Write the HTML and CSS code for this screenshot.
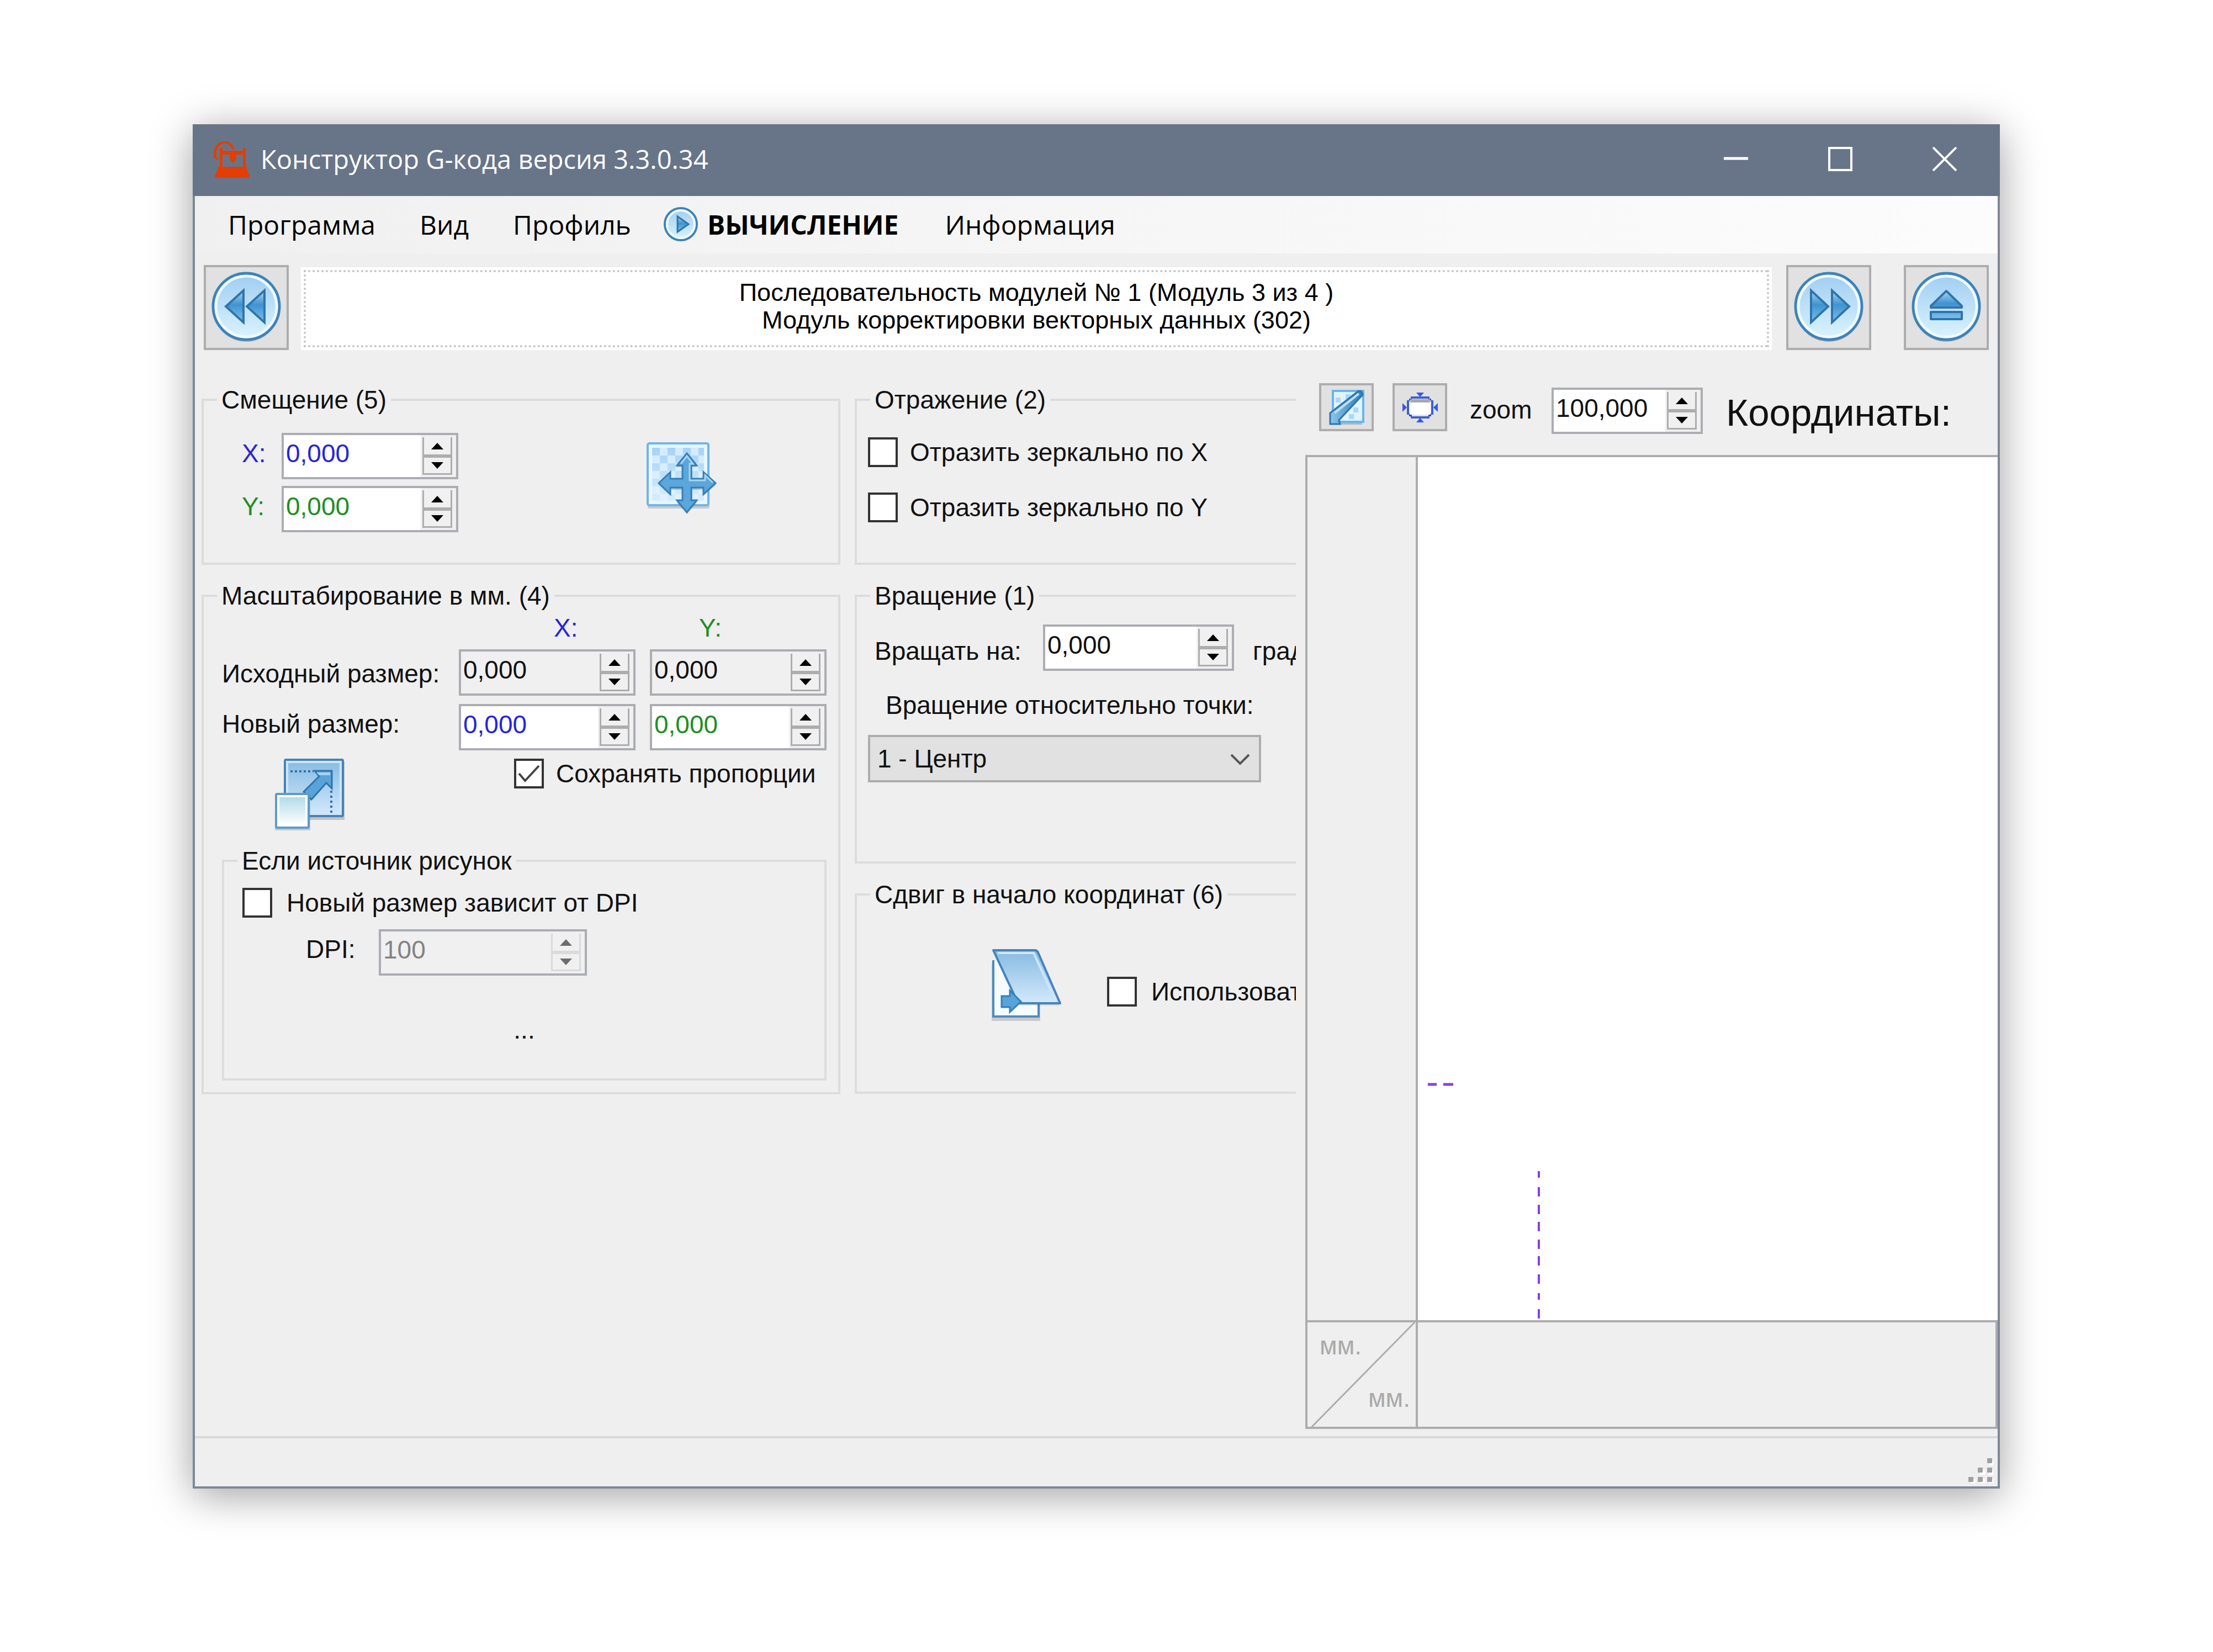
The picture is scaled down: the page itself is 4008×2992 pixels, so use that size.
FILE: index.html
```html
<!DOCTYPE html>
<html lang="ru">
<head>
<meta charset="utf-8">
<title>Конструктор G-кода версия 3.3.0.34</title>
<link rel="stylesheet" href="styles.css">
</head>
<body>
<svg class="defs" aria-hidden="true">
  <defs>
    <linearGradient id="disc" x1="0" y1="0" x2="0" y2="1"><stop offset="0" stop-color="#9fcdf1"/><stop offset="1" stop-color="#dcf4ff"/></linearGradient>
    <linearGradient id="glyph" x1="0" y1="0" x2="0" y2="1"><stop offset="0" stop-color="#a9d6f2"/><stop offset=".45" stop-color="#3f93cf"/><stop offset="1" stop-color="#7cc2ef"/></linearGradient>
    <linearGradient id="pane" x1="0" y1="0" x2="0" y2="1"><stop offset="0" stop-color="#86bbe2"/><stop offset="1" stop-color="#d3e9fb"/></linearGradient>
    <linearGradient id="page" x1="0" y1="0" x2="0" y2="1"><stop offset="0" stop-color="#b4dbea"/><stop offset="1" stop-color="#ffffff"/></linearGradient>
    <linearGradient id="pencil" x1="0" y1="0" x2="1" y2="0"><stop offset="0" stop-color="#8cc6ea"/><stop offset="1" stop-color="#2f7db8"/></linearGradient>
    <linearGradient id="checkfade" x1="0" y1="0" x2="0" y2="1"><stop offset="0" stop-color="#e3f3ff" stop-opacity="0"/><stop offset="1" stop-color="#e3f3ff" stop-opacity=".8"/></linearGradient>
    <pattern id="checks" width="28" height="28" patternUnits="userSpaceOnUse" x="10" y="10"><rect width="28" height="28" fill="#d3ebfd"/><rect width="14" height="14" fill="#a5d3f7"/><rect x="14" y="14" width="14" height="14" fill="#a5d3f7"/></pattern>
  </defs>
</svg>
<main class="window">
  <header class="titlebar">
    <svg class="app-icon" viewBox="0 0 67 68" fill="#e23e06">
      <path d="M10 47V36L2 32V18L8 7L16 2H28L36 8L40 17H36L31 9L25 6H18L11 11L7 19V30L10 34Z"/>
      <path d="M13 14h5v5h37v-5h5v34h2v6l5 9v5H4v-5l5-9v-6h4zM18 26v22h37V26H43v9l-6 6-6-6v-9z" fill-rule="evenodd"/>
    </svg>
    <h1 class="title">Конструктор G-кода версия 3.3.0.34</h1>
    <div class="window-buttons">
      <button type="button" aria-label="Свернуть"><svg viewBox="0 0 44 44"><path d="M0 21h44" stroke="#fff" stroke-width="5"/></svg></button>
      <button type="button" aria-label="Развернуть"><svg viewBox="0 0 44 44"><rect x="2" y="2" width="40" height="40" fill="none" stroke="#fff" stroke-width="4"/></svg></button>
      <button type="button" aria-label="Закрыть"><svg viewBox="0 0 44 44"><path d="M1 1l42 42M43 1L1 43" stroke="#fff" stroke-width="4"/></svg></button>
    </div>
  </header>

  <nav class="menu">
    <a href="#program">Программа</a>
    <a href="#view">Вид</a>
    <a href="#profile">Профиль</a>
    <a href="#calc" class="calc">
      <svg viewBox="0 0 64 66"><circle cx="32" cy="34" r="29" fill="#00000030"/><circle cx="32" cy="32" r="29" fill="url(#disc)" stroke="#3c83bb" stroke-width="4"/><circle cx="32" cy="32" r="25" fill="none" stroke="#f3fbff" stroke-width="4"/><path d="M26 18v28l20-14z" fill="url(#glyph)" stroke="#2f74ac" stroke-width="3"/></svg>
      <b>ВЫЧИСЛЕНИЕ</b>
    </a>
    <a href="#info">Информация</a>
  </nav>

  <section class="module-bar">
    <button type="button" class="nav-button" aria-label="Предыдущий модуль">
      <svg viewBox="0 0 126 130"><circle cx="63" cy="67" r="60" fill="#00000038"/><circle cx="63" cy="63" r="60" fill="url(#disc)" stroke="#3c83bb" stroke-width="5"/><circle cx="63" cy="63" r="55" fill="none" stroke="#eef9ff" stroke-width="5"/><path d="M58 34v58L26 63zM96 34v58L64 63z" fill="url(#glyph)" stroke="#2f74ac" stroke-width="4"/></svg>
    </button>
    <div class="module-name"><p>Последовательность модулей № 1 (Модуль 3 из 4 )<br>Модуль корректировки векторных данных (302)</p></div>
    <button type="button" class="nav-button" aria-label="Следующий модуль">
      <svg viewBox="0 0 126 130"><circle cx="63" cy="67" r="60" fill="#00000038"/><circle cx="63" cy="63" r="60" fill="url(#disc)" stroke="#3c83bb" stroke-width="5"/><circle cx="63" cy="63" r="55" fill="none" stroke="#eef9ff" stroke-width="5"/><path d="M31 34v58l31-29zM69 34v58l31-29z" fill="url(#glyph)" stroke="#2f74ac" stroke-width="4"/></svg>
    </button>
    <button type="button" class="nav-button eject" aria-label="Извлечь">
      <svg viewBox="0 0 126 130"><circle cx="63" cy="67" r="60" fill="#00000038"/><circle cx="63" cy="63" r="60" fill="url(#disc)" stroke="#3c83bb" stroke-width="5"/><circle cx="63" cy="63" r="55" fill="none" stroke="#eef9ff" stroke-width="5"/><path d="M63 35l28 27v3H35v-3zM35 73h56v13H35z" fill="url(#glyph)" stroke="#2f74ac" stroke-width="4" stroke-linejoin="round"/></svg>
    </button>
  </section>

  <div class="workspace">
    <form class="settings">
      <div class="column">
        <fieldset class="group">
          <legend>Смещение (5)</legend>
          <div class="offset">
            <div class="offset-fields">
              <div class="field"><label class="x" for="ox">X:</label><div class="spinner"><input id="ox" class="x" value="0,000"><button type="button" class="up" aria-label="Больше"></button><button type="button" class="down" aria-label="Меньше"></button></div></div>
              <div class="field"><label class="y" for="oy">Y:</label><div class="spinner"><input id="oy" class="y" value="0,000"><button type="button" class="up" aria-label="Больше"></button><button type="button" class="down" aria-label="Меньше"></button></div></div>
            </div>
            <svg class="tool-icon" viewBox="0 0 128 132">
              <rect x="2" y="6" width="112" height="114" rx="3" fill="#00000028"/>
              <rect x="2" y="2" width="110" height="112" rx="3" fill="#e9f6ff" stroke="#6db6ec" stroke-width="4"/>
              <rect x="10" y="10" width="94" height="96" fill="url(#checks)"/>
              <rect x="10" y="10" width="94" height="96" fill="url(#checkfade)"/>
              <path d="M73 24L92 45H83V67H103V57L126 77L103 97V86H83V108H92L73 130L54 108H65V86H43V97L22 77L43 57V67H65V45H54Z" fill="#00000030"/>
              <path d="M73 20L91 42H81V66H103V54L125 74L103 94V82H81V105H91L73 127L55 105H65V82H43V94L22 74L43 54V66H65V42H55Z" fill="#5ba6da" stroke="#357fb8" stroke-width="3"/>
              <path d="M62 39L73 25L84 39H78V69H106V60L120 73" fill="none" stroke="#a9d5f2" stroke-width="3"/>
            </svg>
          </div>
        </fieldset>

        <fieldset class="group scaling">
          <legend>Масштабирование в мм. (4)</legend>
          <div class="sizes">
            <span></span><span class="axis-x x">X:</span><span class="axis-y y">Y:</span>
            <label class="source" for="sx">Исходный размер:</label>
            <div class="spinner readonly"><input id="sx" value="0,000" readonly><button type="button" class="up" aria-label="Больше"></button><button type="button" class="down" aria-label="Меньше"></button></div>
            <div class="spinner readonly"><input id="sy" aria-label="Исходный размер Y" value="0,000" readonly><button type="button" class="up" aria-label="Больше"></button><button type="button" class="down" aria-label="Меньше"></button></div>
            <label for="nx">Новый размер:</label>
            <div class="spinner"><input id="nx" class="x" value="0,000"><button type="button" class="up" aria-label="Больше"></button><button type="button" class="down" aria-label="Меньше"></button></div>
            <div class="spinner"><input id="ny" class="y" aria-label="Новый размер Y" value="0,000"><button type="button" class="up" aria-label="Больше"></button><button type="button" class="down" aria-label="Меньше"></button></div>
          </div>
          <div class="proportions">
            <svg class="tool-icon" viewBox="0 0 128 132">
              <rect x="17" y="5" width="109" height="106" fill="#00000030"/>
              <rect x="18" y="2" width="105" height="102" rx="2" fill="url(#pane)" stroke="#4583bb" stroke-width="4"/>
              <rect x="22" y="6" width="97" height="94" fill="none" stroke="#cfe6f8" stroke-width="4"/>
              <path d="M28 23h42" stroke="#2f74ac" stroke-width="4" stroke-dasharray="4 4"/><path d="M102 58v40" stroke="#2f74ac" stroke-width="4" stroke-dasharray="4 5"/>
              <path d="M72 22h31v32L93 44L66 74L52 60L80 32Z" fill="#58a3da" stroke="#2f74ac" stroke-width="3"/>
              <path d="M75 25h25v5H80z" fill="#a9d1ee"/>
              <rect x="0" y="66" width="64" height="64" fill="#00000028"/>
              <rect x="2" y="64" width="59" height="61" rx="2" fill="#fff" stroke="#5b9ccb" stroke-width="4"/><rect x="8" y="70" width="47" height="50" fill="url(#page)"/>
            </svg>
            <label class="check"><input type="checkbox" checked>Сохранять пропорции</label>
          </div>
          <fieldset class="group picture">
            <legend>Если источник рисунок</legend>
            <label class="check"><input type="checkbox">Новый размер зависит от DPI</label>
            <div class="dpi"><label for="dpi">DPI:</label><div class="spinner disabled"><input id="dpi" value="100" disabled><button type="button" class="up" aria-label="Больше" disabled></button><button type="button" class="down" aria-label="Меньше" disabled></button></div></div>
            <p class="note">...</p>
          </fieldset>
        </fieldset>
      </div>

      <div class="column">
        <fieldset class="group mirror">
          <legend>Отражение (2)</legend>
          <label class="check"><input type="checkbox">Отразить зеркально по X</label>
          <label class="check"><input type="checkbox">Отразить зеркально по Y</label>
        </fieldset>

        <fieldset class="group rotation">
          <legend>Вращение (1)</legend>
          <div class="angle"><label for="angle">Вращать на:</label><div class="spinner"><input id="angle" value="0,000"><button type="button" class="up" aria-label="Больше"></button><button type="button" class="down" aria-label="Меньше"></button></div><span>градусов</span></div>
          <label class="pivot-label" for="pivot">Вращение относительно точки:</label>
          <div class="pivot">
            <select id="pivot"><option>1 - Центр</option></select>
            <svg viewBox="0 0 36 22"><path d="M2 2l16 16L34 2" fill="none" stroke="#555" stroke-width="4"/></svg>
          </div>
        </fieldset>

        <fieldset class="group">
          <legend>Сдвиг в начало координат (6)</legend>
          <div class="origin">
            <svg class="tool-icon" viewBox="0 0 128 132">
              <path d="M0 26h88v104H0z" fill="#00000028"/>
              <path d="M3 20V122H85V60" fill="#f5fbff" stroke="#4a8dc4" stroke-width="4"/>
              <path d="M3 6L50 102H124z" fill="#00000022"/>
              <path d="M3 2H78Q82 2 84 6L124 98H52Q48 98 46 94Z" fill="url(#pane)" stroke="#4583bb" stroke-width="4" stroke-linejoin="round"/>
              <path d="M11 7H76L116 94" fill="none" stroke="#cfe6f8" stroke-width="4"/>
              <path d="M18 85H33V75L53 95L33 114V105H18Z" fill="#58a3da" stroke="#357fb8" stroke-width="3"/>
            </svg>
            <label class="check"><input type="checkbox">Использовать</label>
          </div>
        </fieldset>
      </div>
    </form>

    <section class="preview">
      <div class="preview-bar">
        <button type="button" class="mini" aria-label="Очистить">
          <svg viewBox="0 0 64 64"><path d="M6 60h54v3H6z" fill="#00000030"/><rect x="7" y="2" width="55" height="56" fill="#e2f4ff" stroke="#66b7ee" stroke-width="4"/><path d="M12 14h9v9h-9zM21 23h9v9h-9zM30 8h9v9h-9zM44 32h9v9h-9zM36 44h9v9h-9z" fill="#a8d9fa"/><path d="M2 62V42L52 3Q60 0 61 9L18 55L20 62Z" fill="url(#pencil)" stroke="#2f74ac" stroke-width="3"/><path d="M10 42L54 7" stroke="#bfe2f6" stroke-width="4"/></svg>
        </button>
        <button type="button" class="mini" aria-label="Вписать">
          <svg viewBox="0 0 64 64"><path d="M15 14h34M10 19v26M54 19v26M15 50h34" stroke="#3f5fd0" stroke-width="4"/><path d="M12 16h5v5h-5zM47 16h5v5h-5zM12 43h5v5h-5zM47 43h5v5h-5z" fill="#2c49b8"/><rect x="13" y="19" width="38" height="26" fill="#fff"/><rect x="14" y="17" width="36" height="6" fill="#a9a9a9"/><path d="M25 5h14l-7 8zM25 59h14l-7-8zM0 24v16l8-8zM64 24v16l-8-8z" fill="#3558e0"/></svg>
        </button>
        <label class="zoom-label" for="zoom">zoom</label>
        <div class="spinner zoom"><input id="zoom" value="100,000"><button type="button" class="up" aria-label="Больше"></button><button type="button" class="down" aria-label="Меньше"></button></div>
        <span class="coords">Координаты:</span>
      </div>
      <div class="canvas">
        <div class="ruler-left"></div>
        <div class="plot">
          <svg viewBox="0 0 230 440" stroke="#8a3fe0"><path d="M18 13h16M46 13h18" stroke-width="5"/><path d="M219 170v12M219 199v17M219 231v17M219 262v17M219 294v17M219 324v17M219 357v17M219 391v12M219 420v17" stroke-width="4"/></svg>
        </div>
        <div class="corner">
          <svg viewBox="0 0 196 188" preserveAspectRatio="none"><path d="M194 0L8 188" stroke="#adadad" stroke-width="3"/></svg>
          <span>мм.</span><span class="lower">мм.</span>
        </div>
        <div class="ruler-bottom"></div>
      </div>
    </section>
  </div>

  <footer class="status">
    <svg viewBox="0 0 48 48"><g fill="#fff"><path d="M41 7h9v9h-9zM41 24h9v9h-9zM24 24h9v9h-9zM41 41h9v9h-9zM24 41h9v9h-9zM7 41h9v9H7z"/></g><g fill="#a0a0a0"><path d="M37 3h9v9h-9zM37 20h9v9h-9zM20 20h9v9h-9zM37 37h9v9h-9zM20 37h9v9h-9zM3 37h9v9H3z"/></g></svg>
  </footer>
</main>
</body>
</html>
```
FILE: styles.css
```css
* { box-sizing: border-box; }

body {
  margin: 0;
  min-height: 100vh;
  padding: 225px 386px 296px 349px;
  display: flex;
  background: #fff;
  color: #111;
  font: 46px/60px "Liberation Sans", Arial, sans-serif;
}

p, h1, form { margin: 0; }
svg { display: block; flex: none; }
button { padding: 0; font: inherit; }
.defs { position: absolute; width: 0; height: 0; }
.x { color: #2626d9; }
.y { color: #1f8f1f; }

.window {
  flex: 1;
  min-width: 0;
  display: flex;
  flex-direction: column;
  border: 4px solid #7b8899;
  background: #efefef;
  box-shadow: 0 12px 70px rgba(0, 0, 0, .38);
}

/* Title bar */
.titlebar {
  display: flex;
  align-items: center;
  height: 126px;
  margin: -4px -4px 0;
  padding: 0 0 4px 36px;
  box-sizing: content-box;
  background: #687588;
  color: #fff;
}
.app-icon { width: 67px; height: 68px; margin-right: 20px; }
.title { flex: 1; font: 400 47px/60px "Open Sans", "Noto Sans", sans-serif; }
.window-buttons { display: flex; padding-right: 6px; }
.window-buttons button {
  display: grid;
  place-items: center;
  width: 189px;
  height: 126px;
  border: 0;
  background: none;
}
.window-buttons svg { width: 44px; height: 44px; }

/* Menu */
.menu {
  display: flex;
  align-items: center;
  gap: 80px;
  height: 104px;
  padding-left: 60px;
  background: linear-gradient(90deg, #f0f0f0, #fcfcfc);
  font: 48px/60px "Open Sans", "Noto Sans", sans-serif;
}
.menu a { color: #000; text-decoration: none; }
.calc { display: flex; align-items: center; gap: 16px; margin: 0 4px 0 -22px; }
.calc svg { width: 64px; height: 66px; }

/* Module navigation */
.module-bar { display: flex; padding: 21px 16px 0; }
.nav-button {
  display: grid;
  place-items: center;
  width: 154px;
  height: 154px;
  border: 4px solid #adadad;
  background: #e1e1e1;
}
.nav-button svg { width: 126px; height: 130px; }
.eject { margin-left: 59px; }
.module-name {
  flex: 1;
  height: 150px;
  margin: 4px 26px 0 22px;
  padding: 5px;
  background: #fff;
}
.module-name p {
  height: 140px;
  padding-top: 12px;
  border: 4px dotted #c4c4c4;
  color: #000;
  font-size: 45px;
  line-height: 50px;
  text-align: center;
}

/* Workspace */
.workspace {
  flex: 1;
  display: grid;
  grid-template-columns: 1994fr 1254fr;
  column-gap: 17px;
  padding: 60px 0 13px;
}
.settings {
  display: grid;
  grid-template-columns: 1157px 1157px;
  align-content: start;
  gap: 26px;
  min-width: 0;
  padding-left: 12px;
  overflow: hidden;
}
.column { display: grid; gap: 26px; align-content: start; }

.group {
  min-width: 0;
  margin: 0;
  padding: 0;
  border: 4px solid #dcdcdc;
}
.group legend { margin-left: 24px; padding: 0 8px; }

.spinner {
  display: grid;
  grid-template-columns: 1fr 57px;
  grid-template-rows: 34px 34px;
  align-content: start;
  width: 320px;
  height: 84px;
  padding: 4px 7px 0 0;
  border: 4px solid #abadb3;
  background: #f0f0f0;
}
.spinner input {
  grid-row: 1 / 3;
  width: 100%;
  min-width: 0;
  height: 76px;
  margin-top: -4px;
  padding: 0 4px 10px;
  border: 0;
  background: #fff;
  color: #111;
  font: inherit;
}
.spinner input.x { color: #2626d9; }
.spinner input.y { color: #1f8f1f; }
.spinner button {
  display: grid;
  place-items: center;
  margin-left: 3px;
  border: 3px solid #adadad;
  background: #f0f0f0;
}
.spinner .up { border-top: 0; }
.spinner button::after {
  content: "";
  border: 11px solid transparent;
  border-top-width: 0;
  border-bottom: 12px solid #000;
}
.spinner .down::after { border-bottom: 0; border-top: 12px solid #000; }
.readonly input, .disabled input { background: #f0f0f0; }
.disabled input { color: #838383; }
.spinner.disabled button { border-color: #dadada; }
.disabled .up::after { border-bottom-color: #6d6d6d; }
.disabled .down::after { border-top-color: #6d6d6d; }

.check { display: flex; align-items: center; gap: 22px; height: 54px; white-space: nowrap; }
.check input {
  appearance: none;
  flex: none;
  width: 54px;
  height: 54px;
  margin: 0;
  border: 4px solid #333;
  background: #fff;
}
.check input:checked {
  background: #fff url("data:image/svg+xml,%3Csvg xmlns='http://www.w3.org/2000/svg' viewBox='0 0 46 46'%3E%3Cpath d='M5 23l11 13L41 9' fill='none' stroke='%23444' stroke-width='4'/%3E%3C/svg%3E");
}
.tool-icon { width: 128px; height: 132px; }

/* Offset */
.offset { display: flex; gap: 341px; padding: 30px 0 55px 69px; }
.offset .tool-icon { margin-top: 17px; }
.offset-fields { display: grid; gap: 12px; }
.field { display: flex; }
.field label { width: 72px; line-height: 74px; }

/* Scaling */
.scaling { padding-bottom: 21px; }
.sizes {
  display: grid;
  grid-template-columns: 403px 320px 320px;
  gap: 11px 26px;
  padding-left: 33px;
  line-height: 72px;
}
.sizes > span { line-height: 56px; }
.sizes .source { line-height: 88px; }
.axis-x { padding-left: 172px; }
.axis-y { padding-left: 89px; }
.proportions {
  display: flex;
  gap: 305px;
  height: 170px;
  padding: 15px 0 0 129px;
}
.picture { margin: 0 21px 0 33px; padding-bottom: 58px; }
.picture .check { margin: 19px 0 21px 33px; }
.picture .check input, .origin .check input { margin-right: 4px; }
.dpi { display: flex; padding-left: 148px; line-height: 72px; }
.dpi label { width: 132px; }
.dpi .spinner { width: 377px; }
.note { padding-top: 68px; text-align: center; }

/* Mirror */
.mirror { padding: 0 0 73px 20px; }
.mirror legend { margin-left: 4px; }
.mirror .check { margin-top: 46px; }
.mirror legend + .check { margin-top: 38px; }

/* Rotation */
.rotation { padding-bottom: 143px; }
.angle { display: flex; height: 138px; padding: 22px 0 0 32px; line-height: 96px; }
.angle label { width: 305px; }
.angle .spinner { width: 346px; }
.angle span { padding-left: 34px; }
.pivot-label { display: block; padding-left: 52px; }
.pivot { position: relative; width: 712px; margin: 24px 0 0 20px; }
.pivot select {
  display: block;
  appearance: none;
  width: 100%;
  height: 86px;
  padding: 0 0 0 13px;
  border: 4px solid #adadad;
  border-radius: 0;
  background: #e1e1e1;
  color: #111;
  font: inherit;
}
.pivot svg { position: absolute; top: 34px; right: 20px; width: 36px; height: 22px; pointer-events: none; }

/* Origin shift */
.origin { display: flex; gap: 81px; padding: 69px 0 126px 244px; }
.origin .check { margin-top: 50px; }

/* Preview */
.preview { display: flex; flex-direction: column; min-width: 0; }
.preview-bar { display: flex; align-items: flex-start; height: 130px; padding-left: 25px; }
.mini {
  display: grid;
  place-items: center;
  width: 99px;
  height: 87px;
  margin-right: 34px;
  border: 4px solid #adadad;
  background: #e1e1e1;
}
.mini svg { width: 64px; height: 64px; }
.zoom-label { width: 155px; padding-left: 7px; line-height: 96px; }
.zoom { width: 274px; margin-top: 8px; }
.coords { padding-left: 42px; font-size: 69px; line-height: 108px; }
.canvas {
  flex: 1;
  display: grid;
  grid-template-columns: 200px 1fr;
  grid-template-rows: 1fr 193px;
  border: solid #adadad;
  border-width: 4px 0 0 4px;
}
.ruler-left { border: solid #adadad; border-width: 0 4px 4px 0; }
.plot { display: flex; align-items: flex-end; border-bottom: 4px solid #adadad; background: #fff; }
.plot svg { width: 230px; height: 440px; }
.corner {
  display: flex;
  flex-direction: column;
  justify-content: space-between;
  position: relative;
  padding: 12px 10px 22px 22px;
  border: solid #adadad;
  border-width: 0 4px 4px 0;
  color: #a9a9a9;
}
.corner svg { position: absolute; inset: 0; width: 100%; height: 100%; }
.lower { text-align: right; }
.ruler-bottom { border: solid #adadad; border-width: 0 4px 4px 0; }

/* Status bar */
.status {
  display: flex;
  justify-content: flex-end;
  align-items: flex-end;
  height: 91px;
  padding: 0 8px 6px;
  border-top: 4px solid #d9d9d9;
}
.status svg { width: 48px; height: 48px; }
```
